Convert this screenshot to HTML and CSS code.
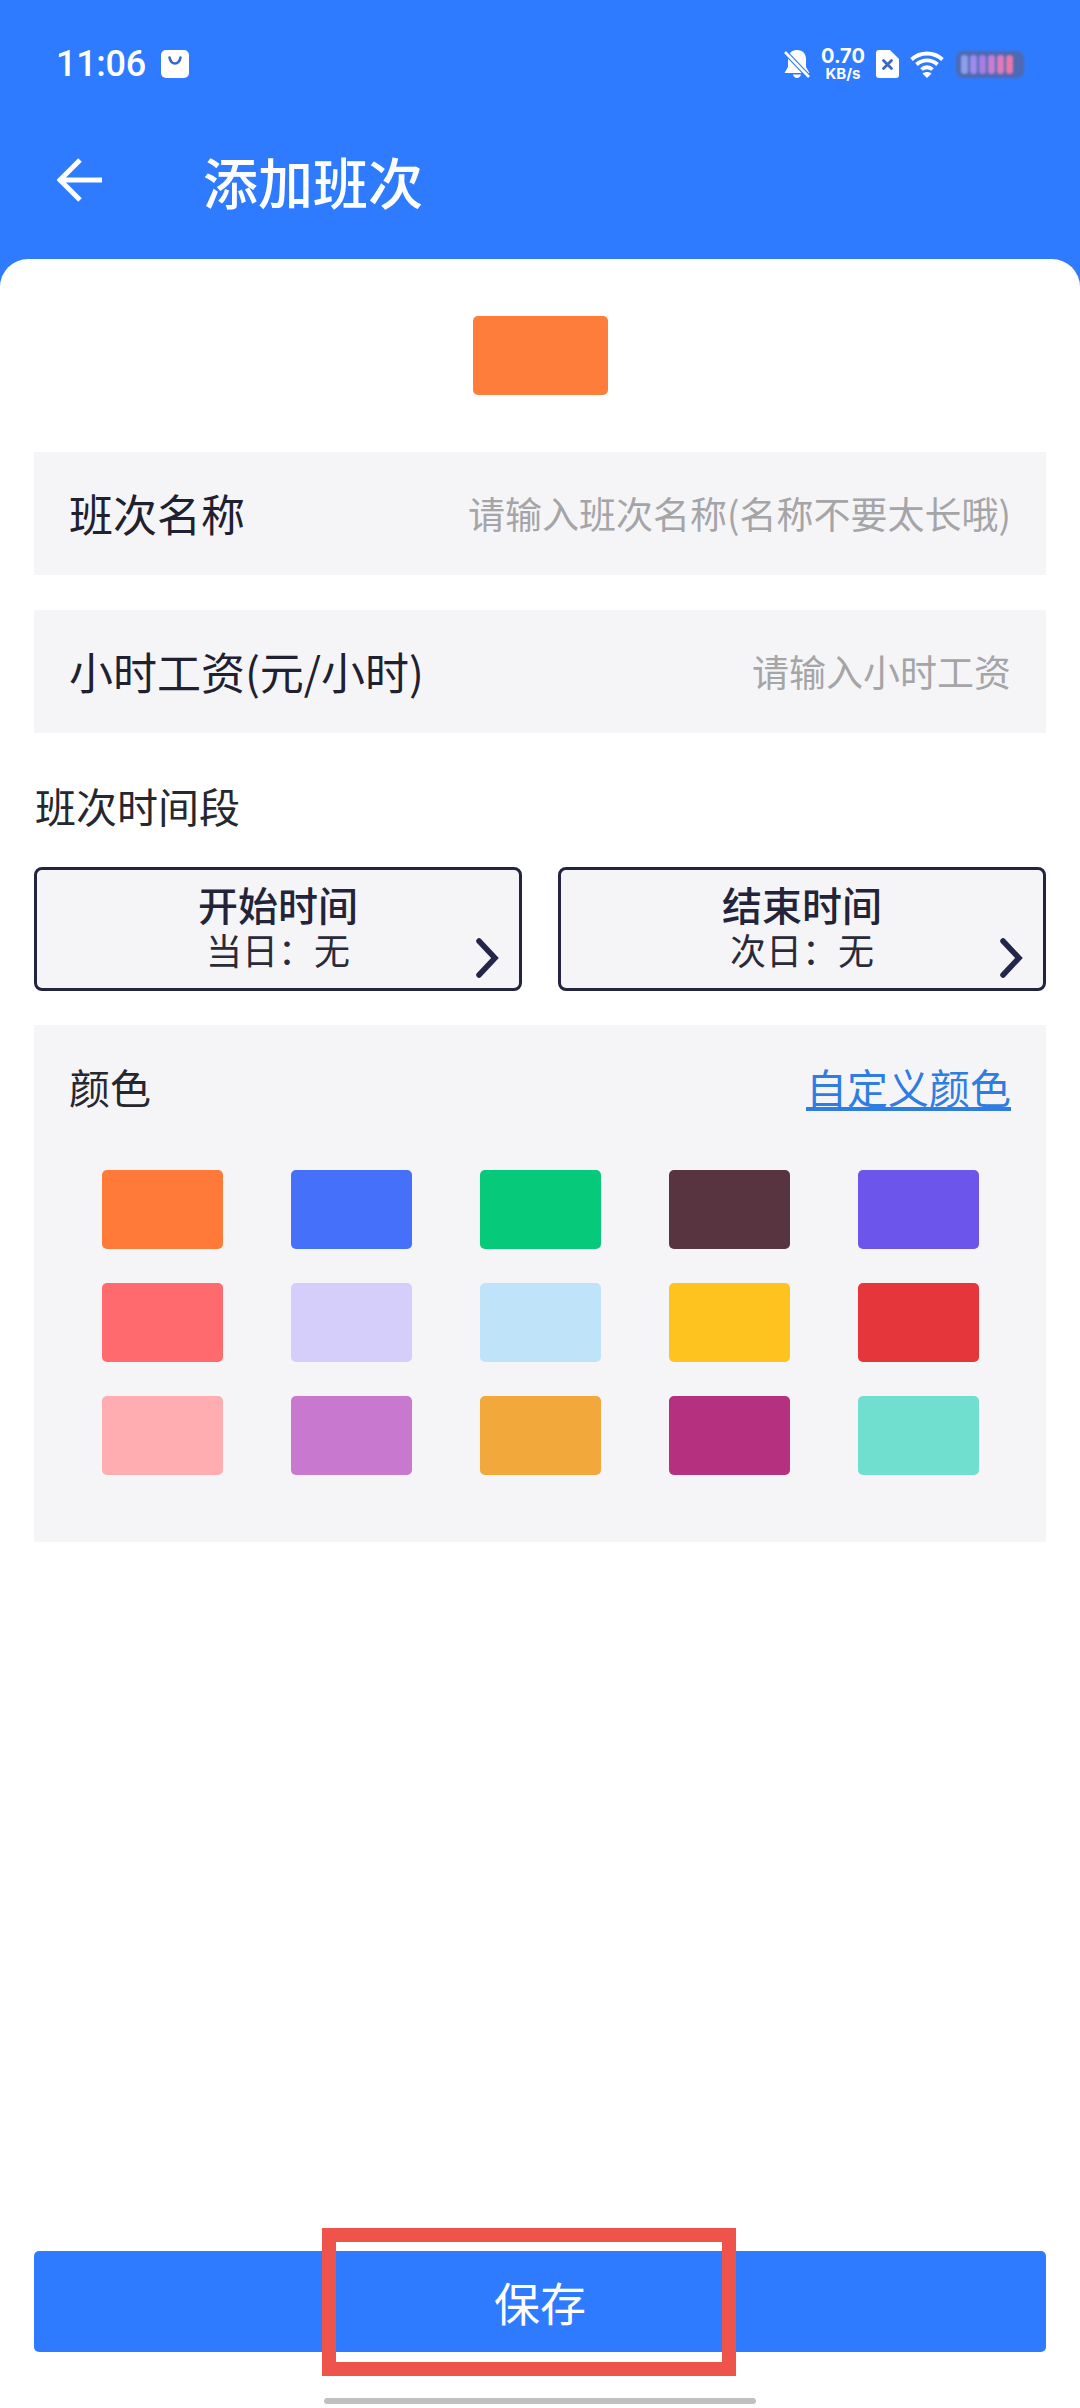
FILE: index.html
```html
<!DOCTYPE html>
<html lang="zh-CN">
<head>
<meta charset="utf-8">
<title>添加班次</title>
<link rel="stylesheet" href="styles.css">
</head>
<body>
<div class="screen">
  <header class="header">
    <div class="statusbar">
      <div class="status-left">
        <span class="time">11:06</span>
        <svg class="notif" viewBox="0 0 28 28"><rect width="28" height="28" rx="5" fill="#fff"/><path d="M8.500 7.500c1 4.500 3 6 5.500 6s4.500-1.500 5.500-6" fill="none" stroke="#3a67c4" stroke-width="2.600" stroke-linecap="round"/></svg>
      </div>
      <div class="status-right">
        <svg class="bell" viewBox="0 0 26 28"><path d="M13 0c6 0 9 4 9 9.500V17l3.500 6H.5L4 17V9.500C4 4 7 0 13 0zM9 24.500h8c-.5 2.200-2 3.500-4 3.500s-3.500-1.300-4-3.500z" fill="#fff"/><path d="M1 2l24 25" stroke="#2f7bff" stroke-width="5"/><path d="M1 2l24 25" stroke="#fff" stroke-width="2.600"/></svg>
        <div class="speed"><span class="speed-num">0.70</span><span class="speed-unit">KB/s</span></div>
        <svg class="sim" viewBox="0 0 23 28"><path d="M3 0h11l9 9v16a3 3 0 0 1-3 3H3a3 3 0 0 1-3-3V3a3 3 0 0 1 3-3z" fill="#fff"/><path d="M7.500 10.500l8 8M15.500 10.500l-8 8" stroke="#3a67c4" stroke-width="2.800" stroke-linecap="round"/></svg>
        <svg class="wifi" viewBox="0 0 34 28"><g fill="none" stroke="#fff" stroke-width="3.800"><path d="M1.500 9.500c9-8 22-8 31 0"/><path d="M6.500 14.500c6-5.500 15-5.500 21 0"/><path d="M11.500 19.500c3-3 8-3 11 0"/></g><path d="M12.500 23.500c2.500-2 6.500-2 9 0L17 28z" fill="#fff"/></svg>
        <div class="battery">
          <i class="cell c1"></i><i class="cell c2"></i><i class="cell c3"></i><i class="cell c4"></i><i class="cell c5"></i><i class="cell c6"></i>
        </div>
      </div>
    </div>
    <div class="toolbar">
      <svg class="back" viewBox="0 0 46 46"><path d="M23 3L3 23l20 20M3 23h42" fill="none" stroke="#fff" stroke-width="5"/></svg>
      <h1 class="title">添加班次</h1>
    </div>
  </header>

  <main class="content">
    <div class="preview"></div>

    <div class="field">
      <span class="field-label">班次名称</span>
      <span class="placeholder">请输入班次名称(名称不要太长哦)</span>
    </div>
    <div class="field">
      <span class="field-label">小时工资(元/小时)</span>
      <span class="placeholder">请输入小时工资</span>
    </div>

    <div class="section-label">班次时间段</div>

    <div class="times">
      <div class="time-btn">
        <div class="time-title">开始时间</div>
        <div class="time-value">当日：无</div>
        <svg class="chevron" viewBox="0 0 24 40"><path d="M4 3l16 17L4 37" fill="none" stroke="#23254a" stroke-width="5.500" stroke-linecap="round"/></svg>
      </div>
      <div class="time-btn">
        <div class="time-title">结束时间</div>
        <div class="time-value">次日：无</div>
        <svg class="chevron" viewBox="0 0 24 40"><path d="M4 3l16 17L4 37" fill="none" stroke="#23254a" stroke-width="5.500" stroke-linecap="round"/></svg>
      </div>
    </div>

    <section class="colors">
      <div class="colors-head">
        <span class="colors-title">颜色</span>
        <a class="colors-link">自定义颜色</a>
      </div>
      <div class="swatches">
        <div class="swatch s1"></div><div class="swatch s2"></div><div class="swatch s3"></div><div class="swatch s4"></div><div class="swatch s5"></div>
        <div class="swatch s6"></div><div class="swatch s7"></div><div class="swatch s8"></div><div class="swatch s9"></div><div class="swatch s10"></div>
        <div class="swatch s11"></div><div class="swatch s12"></div><div class="swatch s13"></div><div class="swatch s14"></div><div class="swatch s15"></div>
      </div>
    </section>

    <div class="spacer"></div>
    <div class="save">保存</div>
    <div class="home-wrap"><div class="home"></div></div>
  </main>

  <div class="highlight"></div>
</div>
</body>
</html>
```
FILE: styles.css
```css
* { box-sizing: border-box; margin: 0; padding: 0; }
html, body { width: 1080px; height: 2408px; overflow: hidden; }
body { font-family: "Noto Sans CJK SC", "Noto Sans", sans-serif; background: #2f7bff; }

.screen { position: relative; width: 1080px; height: 2408px; display: flex; flex-direction: column; }

.header { height: 259px; flex: none; background: #2f7bff; color: #fff; display: flex; flex-direction: column; }
.statusbar { height: 126px; padding: 47px 56px 0; display: flex; justify-content: space-between; align-items: flex-start; }
.status-left { display: flex; align-items: center; gap: 15px; height: 34px; }
.time { font-family: "Roboto", sans-serif; font-weight: 500; font-size: 36px; line-height: 34px; letter-spacing: -0.3px; }
.notif { width: 28px; height: 28px; }
.status-right { display: flex; align-items: center; gap: 11px; height: 34px; }
.bell { width: 26px; height: 28px; }
.speed { display: flex; flex-direction: column; align-items: center; width: 44px; font-family: "Inter", "Roboto", sans-serif; font-weight: 700; }
.speed-num { font-size: 20px; line-height: 20px; }
.speed-unit { font-size: 15px; line-height: 16px; }
.sim { width: 23px; height: 28px; }
.wifi { width: 34px; height: 28px; }
.battery { width: 68px; height: 27px; margin-left: 1px; padding: 4px 5px; border-radius: 7px; background: #4d6ab3; display: flex; gap: 2px; filter: blur(1px); }
.cell { width: 7px; border-radius: 3px; }
.c1 { background: #8f9fe6; }
.c2 { background: #9c8cec; }
.c3 { background: #a87ee0; }
.c4 { background: #c57fd0; }
.c5 { background: #de7cbb; }
.c6 { background: #ea77a8; }

.toolbar { height: 92px; padding: 16px 0 0 57px; display: flex; align-items: center; }
.back { width: 46px; height: 46px; flex: none; }
.title { margin-left: 100px; font-size: 55px; line-height: 70px; font-weight: 500; }

.content { flex: 1; background: #fff; border-radius: 28px 28px 0 0; padding: 57px 34px 0; display: flex; flex-direction: column; min-height: 0; }

.preview { width: 135px; height: 79px; flex: none; align-self: center; border-radius: 5px; background: #ff7d3a; margin-bottom: 57px; }

.field { height: 123px; flex: none; margin-bottom: 35px; background: #f5f5f8; padding: 0 35px 2px; display: flex; align-items: center; justify-content: space-between; }
.field-label { font-size: 44px; line-height: 56px; color: #1f2030; }
.placeholder { font-size: 37px; line-height: 50px; color: #a5a5a8; }

.section-label { height: 52px; margin-top: 11px; margin-bottom: 36px; font-size: 41px; line-height: 52px; color: #26272f; padding-left: 1px; flex: none; }

.times { display: flex; gap: 36px; flex: none; height: 124px; margin-bottom: 34px; }
.time-btn { position: relative; flex: 1; border: 3px solid #23243f; border-radius: 8px; background: #f5f5f8; display: flex; flex-direction: column; align-items: center; padding-top: 11px; }
.time-title { font-size: 40px; line-height: 46px; font-weight: 500; color: #23243a; }
.time-value { font-size: 36px; line-height: 44px; color: #2a2b3a; }
.chevron { position: absolute; right: 20px; bottom: 10px; width: 24px; height: 40px; }

.colors { flex: none; height: 517px; background: #f5f5f8; padding: 33px 35px 0; }
.colors-head { display: flex; justify-content: space-between; align-items: center; height: 56px; }
.colors-title { font-size: 41px; line-height: 56px; color: #26272f; }
.colors-link { font-size: 41px; line-height: 56px; color: #2f7de1; text-decoration: underline; text-underline-offset: 3px; }
.swatches { display: grid; grid-template-columns: repeat(5, 121px); grid-auto-rows: 79px; column-gap: 68px; row-gap: 34px; padding: 56px 0 0 33px; }
.swatch { border-radius: 5px; }
.s1 { background: #ff7a39; }
.s2 { background: #4570f9; }
.s3 { background: #06c97a; }
.s4 { background: #57343f; }
.s5 { background: #6c55ea; }
.s6 { background: #ff6a6e; }
.s7 { background: #d6cefa; }
.s8 { background: #bfe4f9; }
.s9 { background: #ffc31f; }
.s10 { background: #e5373b; }
.s11 { background: #ffadb0; }
.s12 { background: #c978d0; }
.s13 { background: #f2a83b; }
.s14 { background: #b5307f; }
.s15 { background: #70dfd0; }

.spacer { flex: 1; }
.save { flex: none; height: 101px; background: #2f7bff; border-radius: 5px; color: #fff; font-size: 46px; line-height: 101px; text-align: center; }
.home-wrap { flex: none; height: 56px; padding-top: 46px; display: flex; justify-content: center; }
.home { width: 432px; height: 6px; border-radius: 3px; background: #c0c0c0; }

.highlight { position: absolute; left: 322px; top: 2228px; width: 414px; height: 148px; border: 14px solid #ef544c; }
```
